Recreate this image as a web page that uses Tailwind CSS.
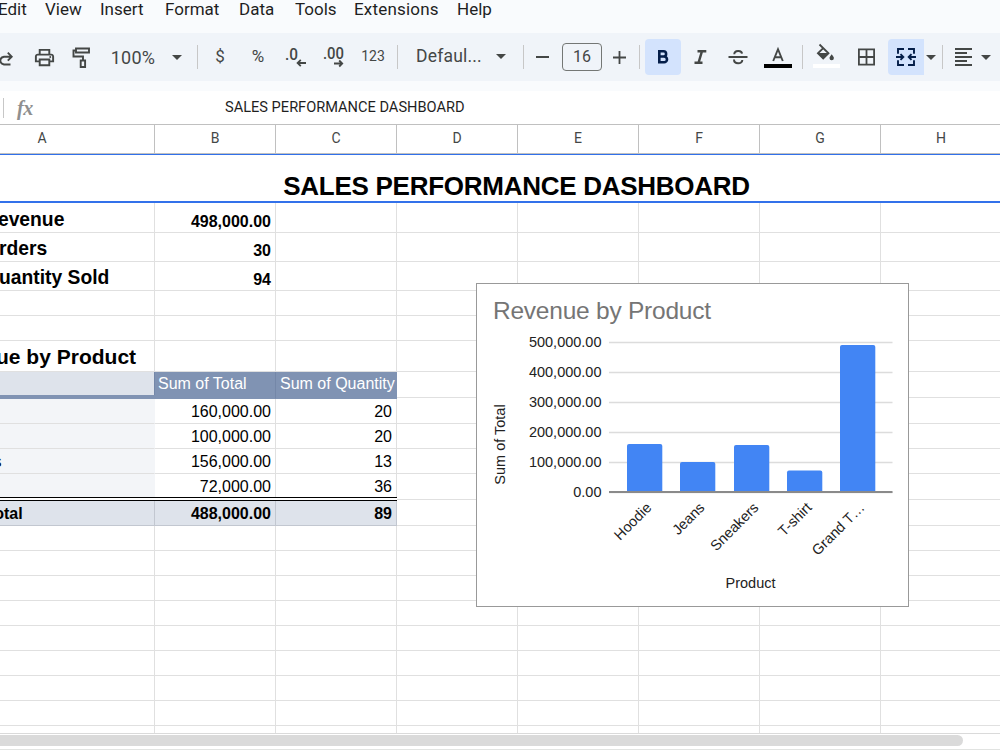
<!DOCTYPE html>
<html lang="en">
<head>
    <meta charset="UTF-8">
    <meta name="viewport" content="width=device-width, initial-scale=1.0">
    <title>Sales Performance Dashboard</title>
    <script src="https://cdn.jsdelivr.net/npm/@tailwindcss/browser@4"></script>
</head>
<body class="w-[1000px] h-[750px] overflow-hidden bg-white font-['Liberation_Sans',sans-serif] text-black">
    <div class="flex flex-col h-[750px]">
        <!-- Menu -->
        <nav class="flex h-[33px] shrink-0 bg-[#f9fbfd] text-[17px] leading-[18px] text-[#1f1f1f] font-[Roboto,sans-serif] whitespace-nowrap">
            <span class="w-[47px] -ml-[2px]">Edit</span>
            <span class="w-[55px]">View</span>
            <span class="w-[65px]">Insert</span>
            <span class="w-[74px]">Format</span>
            <span class="w-[56px]">Data</span>
            <span class="w-[59px]">Tools</span>
            <span class="w-[103px] tracking-[0.2px]">Extensions</span>
            <span>Help</span>
        </nav>

        <!-- Toolbar -->
        <div class="flex items-center h-[48px] shrink-0 bg-[#f0f4f9] text-[#444746] font-[Roboto,sans-serif] whitespace-nowrap">
            <div class="w-[26px] flex"><svg class="w-[16px] h-[24px]" viewBox="0 0 16 24" fill="none" stroke="currentColor" stroke-width="1.9"><path d="M10.500 19.500H4a4.700 4 0 0 1 0-7.800h7.500M7.800 7.700l3.900 4-3.900 4"/></svg></div>
            <div class="w-[36px] flex justify-center"><svg class="w-[23px] h-[23px]" viewBox="0 0 24 24" fill="currentColor"><path d="M19 8h-1V3H6v5H5c-1.660 0-3 1.340-3 3v6h4v4h12v-4h4v-6c0-1.660-1.340-3-3-3zM8 5h8v3H8V5zm8 12v2H8v-4h8v2zm2-2v-2H6v2H4v-4c0-.55.45-1 1-1h14c.55 0 1 .45 1 1v4h-2z"/><circle cx="18" cy="11.500" r="1"/></svg></div>
            <div class="w-[38px] flex justify-center"><svg class="w-[20px] h-[24px]" viewBox="0 0 20 24" fill="none" stroke="currentColor" stroke-width="1.900"><path d="M5 3.500h13v4H5zM5 5.500H2.500v6h9.500V15M9.700 15.500h4.400v6.500H9.700z"/></svg></div>
            <div class="w-[66px] text-center text-[18px] tracking-[0.3px]">100%</div>
            <div class="w-[22px] flex justify-center"><svg class="w-[10px] h-[5px]" viewBox="0 0 10 5" fill="currentColor"><path d="M0 0h10L5 5z"/></svg></div>
            <div class="w-[18px] flex justify-center"><div class="w-px h-[24px] bg-[#c7c7c7]"></div></div>
            <div class="w-[28px] text-center text-[17px]">$</div>
            <div class="w-[48px] text-center text-[17px]">%</div>
            <div class="w-[28px] flex justify-center"><svg class="w-[22px] h-[24px]" viewBox="0 0 22 24" fill="none" stroke="currentColor" stroke-width="1.800"><text x="0" y="15" font-size="16" font-weight="500" fill="currentColor" stroke="none" textLength="13" lengthAdjust="spacingAndGlyphs">.0</text><path d="M21 18h-8M15.800 14.800L12.600 18l3.200 3.200"/></svg></div>
            <div class="w-[48px] flex justify-center"><svg class="w-[22px] h-[24px]" viewBox="0 0 22 24" fill="none" stroke="currentColor" stroke-width="1.800"><text x="0" y="14" font-size="16" font-weight="500" fill="currentColor" stroke="none" textLength="21" lengthAdjust="spacingAndGlyphs">.00</text><path d="M11 18.500h8M16.200 15.500l3 3-3 3"/></svg></div>
            <div class="w-[30px] text-center text-[14px] -mt-[2px]">123</div>
            <div class="w-[19px] flex justify-center"><div class="w-px h-[24px] bg-[#c7c7c7]"></div></div>
            <div class="w-[82px] pl-[9px] text-[17.500px] tracking-[0.2px] -mt-[2px]">Defaul...</div>
            <div class="w-[23px] flex justify-center"><svg class="w-[10px] h-[5px] -mt-[2px]" viewBox="0 0 10 5" fill="currentColor"><path d="M0 0h10L5 5z"/></svg></div>
            <div class="w-[23px] flex justify-center"><div class="w-px h-[24px] bg-[#c7c7c7]"></div></div>
            <div class="w-[15px] mr-[2px] flex justify-center"><div class="w-[13px] h-[2px] bg-[#444746]"></div></div>
            <div class="w-[60px] flex justify-center"><div class="w-[40px] h-[28px] border border-[#747775] rounded-[4px] text-center text-[16px] leading-[26px]">16</div></div>
            <div class="w-[21px] pl-px flex"><svg class="w-[13px] h-[13px]" viewBox="0 0 13 13" fill="none" stroke="currentColor" stroke-width="1.800"><path d="M0 6.500h13M6.500 0v13"/></svg></div>
            <div class="w-[12px] flex justify-center"><div class="w-px h-[24px] bg-[#c7c7c7]"></div></div>
            <div class="w-[36px] h-[36px] rounded-[4px] bg-[#d3e3fd] text-[#041e49] flex items-center justify-center"><svg class="w-[24px] h-[24px]" viewBox="0 0 24 24" fill="none" stroke="currentColor" stroke-width="2.600"><path d="M8.300 6.300h4.200a2.600 2.600 0 0 1 0 5.200H8.300h4.800a2.900 2.900 0 0 1 0 5.800H8.300z"/></svg></div>
            <div class="w-[38px] flex justify-center"><svg class="w-[24px] h-[24px]" viewBox="0 0 24 24" fill="none" stroke="currentColor" stroke-width="2.400"><path d="M9.500 6.200h8.800M6.500 17.800h8M14 6.200l-3.500 11.600"/></svg></div>
            <div class="w-[38px] flex justify-center"><svg class="w-[24px] h-[24px]" viewBox="0 0 24 24" fill="none" stroke="currentColor" stroke-width="2"><path d="M2.500 12h19M8.300 9.300C8.300 5 15.700 5 16 8.600M8 14.500c0 5 8.300 5 8.300.5"/></svg></div>
            <div class="w-[42px] flex justify-center"><svg class="w-[28px] h-[24px]" viewBox="0 0 28 24" fill="none" stroke="currentColor" stroke-width="1.900"><path d="M9.200 16L14 4.200 18.800 16M10.700 12.300h6.600"/><path d="M0 19h28v4H0z" fill="#000" stroke="none"/></svg></div>
            <div class="w-[7px] flex justify-center"><div class="w-px h-[24px] bg-[#c7c7c7]"></div></div>
            <div class="w-[42px] pl-[7px] flex"><svg class="w-[28px] h-[26px] -mt-[2px]" viewBox="0 0 28 26" fill="none" stroke="currentColor" stroke-width="1.800"><path d="M6.500 1.500l9 8.800-5.300 5.200-5.300-5.200 5.600-5.500"/><path d="M5 10h10.500l-5.300 5.500z" fill="currentColor" stroke="none"/><path d="M18.700 11.200c1.300 1.700 2.200 2.900 2.200 3.800a2.200 2.200 0 0 1-4.400 0c0-.9.900-2.100 2.200-3.800z" fill="currentColor" stroke="none"/><path d="M0 21h27v4H0z" fill="#fff" stroke="none"/></svg></div>
            <div class="w-[40px] pl-[10px] flex"><svg class="w-[17px] h-[18px]" viewBox="0 0 17 18" fill="none" stroke="currentColor" stroke-width="1.800"><path d="M.9 1.400h15.200v15.200H.9zM8.500 1.400v15.200M.9 9h15.200"/></svg></div>
            <div class="w-[36px] h-[36px] rounded-l-[4px] bg-[#d3e3fd] text-[#041e49] flex items-center justify-center"><svg class="w-[20px] h-[18px]" viewBox="0 0 20 18" fill="none" stroke="currentColor" stroke-width="1.900"><path d="M8 1H2v4.800M2 12.200V17h6M12 1h6v4.800M18 12.200V17h-6M0 9h7M4.500 6.200L7.300 9l-2.800 2.800M20 9h-7M15.500 6.200L12.700 9l2.800 2.800"/></svg></div>
            <div class="w-[13px] flex justify-center"><svg class="w-[10px] h-[5px]" viewBox="0 0 10 5" fill="currentColor"><path d="M0 0h10L5 5z"/></svg></div>
            <div class="w-[11px] flex justify-center"><div class="w-px h-[24px] bg-[#c7c7c7]"></div></div>
            <div class="w-[31px] flex justify-center"><svg class="w-[17px] h-[18px]" viewBox="0 0 17 18" fill="none" stroke="currentColor" stroke-width="1.900"><path d="M0 1h17M0 5h12M0 9h17M0 13h12M0 17h17"/></svg></div>
            <div class="w-[13px] flex justify-center"><svg class="w-[10px] h-[5px]" viewBox="0 0 10 5" fill="currentColor"><path d="M0 0h10L5 5z"/></svg></div>
        </div>

        <!-- Formula bar -->
        <div class="flex items-center h-[44px] shrink-0 bg-white border-t-[10px] border-t-[#f9fbfd] border-b border-b-[#c0c0c0]">
            <div class="w-px h-[20px] ml-[3px] bg-[#c7c7c7]"></div>
            <div class="w-[221px] pl-[13px] text-[20px] leading-none italic font-bold text-[#8f8f8f] font-['Liberation_Serif',serif] tracking-[-0.5px]">fx</div>
            <div class="text-[14.600px] leading-[20px] -mt-[3px] pt-px text-[#1f1f1f] font-[Roboto,sans-serif] whitespace-nowrap">SALES PERFORMANCE DASHBOARD</div>
        </div>

        <!-- Sheet -->
        <div class="relative h-[609px] shrink-0 overflow-hidden border-b border-[#dadada]">
            <div class="flex h-[29px] -ml-[70px] w-[1200px] border-b border-[#c0c0c0] text-[14px] leading-[27px] text-[#444746] text-center font-[Roboto,sans-serif]">
                <div class="w-[225px] shrink-0 border-r border-[#c0c0c0]">A</div>
                <div class="w-[121px] shrink-0 border-r border-[#c0c0c0]">B</div>
                <div class="w-[121px] shrink-0 border-r border-[#c0c0c0]">C</div>
                <div class="w-[121px] shrink-0 border-r border-[#c0c0c0]">D</div>
                <div class="w-[121px] shrink-0 border-r border-[#c0c0c0]">E</div>
                <div class="w-[121px] shrink-0 border-r border-[#c0c0c0]">F</div>
                <div class="w-[121px] shrink-0 border-r border-[#c0c0c0]">G</div>
                <div class="w-[121px] shrink-0 border-r border-[#c0c0c0]">H</div>
            </div>
            <div class="flex items-end justify-center h-[49px] -ml-[70px] w-[1173px] border-t border-b-2 border-[#3271ea] text-[26px] leading-[30px] tracking-[-0.270px] font-bold">SALES PERFORMANCE DASHBOARD</div>
            <div id="rows" class="-ml-[70px] w-[1200px]"></div>

            <!-- Chart -->
            <svg class="absolute left-[476px] top-[158px] w-[433px] h-[324px] bg-white border border-[#999999] font-['Liberation_Sans',sans-serif]" viewBox="477 284 431 322" fill="#222" font-size="14.500">
                <text x="493" y="319" font-size="24.500" fill="#757575" textLength="218">Revenue by Product</text>
                <g id="chart"></g>
                <path d="M609 492h283.500" stroke="#8a8a8a" stroke-width="2"/>
                <text x="750.500" y="588" text-anchor="middle">Product</text>
                <text transform="translate(505 444.500) rotate(-90)" text-anchor="middle">Sum of Total</text>
            </svg>
        </div>

        <!-- Scrollbar -->
        <div class="h-[16px] shrink-0 pt-px border-b border-[#e1e3e1]">
            <div class="w-[983px] h-[11px] -ml-[20px] rounded-full bg-[#dadada]"></div>
        </div>
    </div>

    <script>
        const line = 'border-[#e0e0e0]';
        const label = 'pl-[4px] text-[19.300px] leading-[24px]';
        const bold = 'font-bold';

        // h = row height with its bottom line, then columns A, B, C
        const rows = [
            { h: 30, a: 'Total Revenue', b: '498,000.00', type: 'kpi' },
            { h: 29, a: 'Total Orders', b: '30', type: 'kpi' },
            { h: 29, a: 'Total Quantity Sold', b: '94', type: 'kpi' },
            { h: 25 }, { h: 25 },
            { h: 31, a: 'Revenue by Product', type: 'heading' },
            { h: 26, a: '', b: 'Sum of Total', c: 'Sum of Quantity', type: 'head' },
            { h: 26, a: 'Hoodie', b: '160,000.00', c: '20', type: 'item' },
            { h: 25, a: 'Jeans', b: '100,000.00', c: '20', type: 'item' },
            { h: 25, a: 'Sneakers', b: '156,000.00', c: '13', type: 'item' },
            { h: 26, a: 'T-shirt', b: '72,000.00', c: '36', type: 'last' },
            { h: 26, a: 'Grand Total', b: '488,000.00', c: '89', type: 'total' },
            { h: 25 }, { h: 25 }, { h: 25 }, { h: 25 }, { h: 25 }, { h: 25 }, { h: 25 }, { h: 25 }, { h: 25 }
        ];

        const styles = {
            empty: ['', '', ''],
            kpi: [`${label} ${bold}`, `justify-end pr-[4px] ${bold}`, ''],
            heading: [`pl-[3px] pb-px text-[21px] leading-[26px] ${bold}`, '', ''],
            head: ['bg-[#dee3eb] border-r-[#7487a8]', 'h-[27px] z-10 bg-[#8093b3] border-[#7487a8] border-b-[#8093b3] text-white pl-[3px] pb-[4px]', 'h-[27px] z-10 bg-[#8093b3] border-[#8093b3] text-white pl-[4px] pb-[4px]'],
            item: ['bg-[#f3f5f8] border-r-[#f3f5f8] pl-[4px] pb-px', 'justify-end pr-[4px] pb-px', 'justify-end pr-[4px] pb-px'],
            last: ['bg-[#f3f5f8] border-r-[#f3f5f8] pl-[4px] pb-[2px]', 'justify-end pr-[4px] pb-[2px]', 'justify-end pr-[4px] pb-[2px]'],
            total: [`bg-[#dee3eb] border-[#c2c7d0] pl-[4px] pb-px ${bold}`, `bg-[#dee3eb] border-[#c2c7d0] justify-end pr-[4px] pb-px ${bold}`, `bg-[#dee3eb] border-[#c2c7d0] justify-end pr-[4px] pb-px ${bold}`]
        };

        document.getElementById('rows').innerHTML = rows.map(r => {
            const s = styles[r.type || 'empty'];
            const cell = (w, cls, text) => `<div class="${w} shrink-0 flex items-end border-r border-b whitespace-nowrap ${cls.includes('border-[') ? '' : line} ${cls}">${text || ''}</div>`;
            return `
                <div class="flex relative text-[16px] leading-[21px]" style="height:${r.h}px">
                    ${cell('w-[225px]', s[0], r.a)}
                    ${cell('w-[121px]', s[1], r.b)}
                    ${cell('w-[121px]', s[2], r.c)}
                    ${cell('w-[121px]', '').repeat(5)}
                    ${r.type === 'head' ? '<div class="absolute z-10 left-0 top-[23px] w-[225px] h-[4px] bg-[#8093b3]"></div>' : ''}
                    ${r.type === 'last' ? '<div class="absolute z-10 left-0 top-[23px] w-[467px] h-[4px] border-y border-black bg-white"></div>' : ''}
                </div>`;
        }).join('');

        // Chart gridlines, bars and their labels
        const bars = [
            { name: 'Hoodie', x: 627, top: 444 },
            { name: 'Jeans', x: 680, top: 462 },
            { name: 'Sneakers', x: 734, top: 445 },
            { name: 'T-shirt', x: 787, top: 470.5 },
            { name: 'Grand T…', x: 840, top: 345 }
        ];
        const ticks = ['0.00', '100,000.00', '200,000.00', '300,000.00', '400,000.00', '500,000.00'];

        document.getElementById('chart').innerHTML =
            ticks.map((t, i) => `
                <path d="M609 ${492.5 - i * 30}h283.500" stroke="#dcdcdc" stroke-width="1.500"/>
                <text x="601.500" y="${496.8 - i * 30.05}" text-anchor="end">${t}</text>`).join('') +
            bars.map(b => `
                <path d="M${b.x} 492V${b.top + 2}q0-2 2-2h31.300q2 0 2 2V492z" fill="#4285f4"/>
                <text transform="translate(${b.x + 25.5} 508.500) rotate(-45)" text-anchor="end">${b.name}</text>`).join('');
    </script>
</body>
</html>
